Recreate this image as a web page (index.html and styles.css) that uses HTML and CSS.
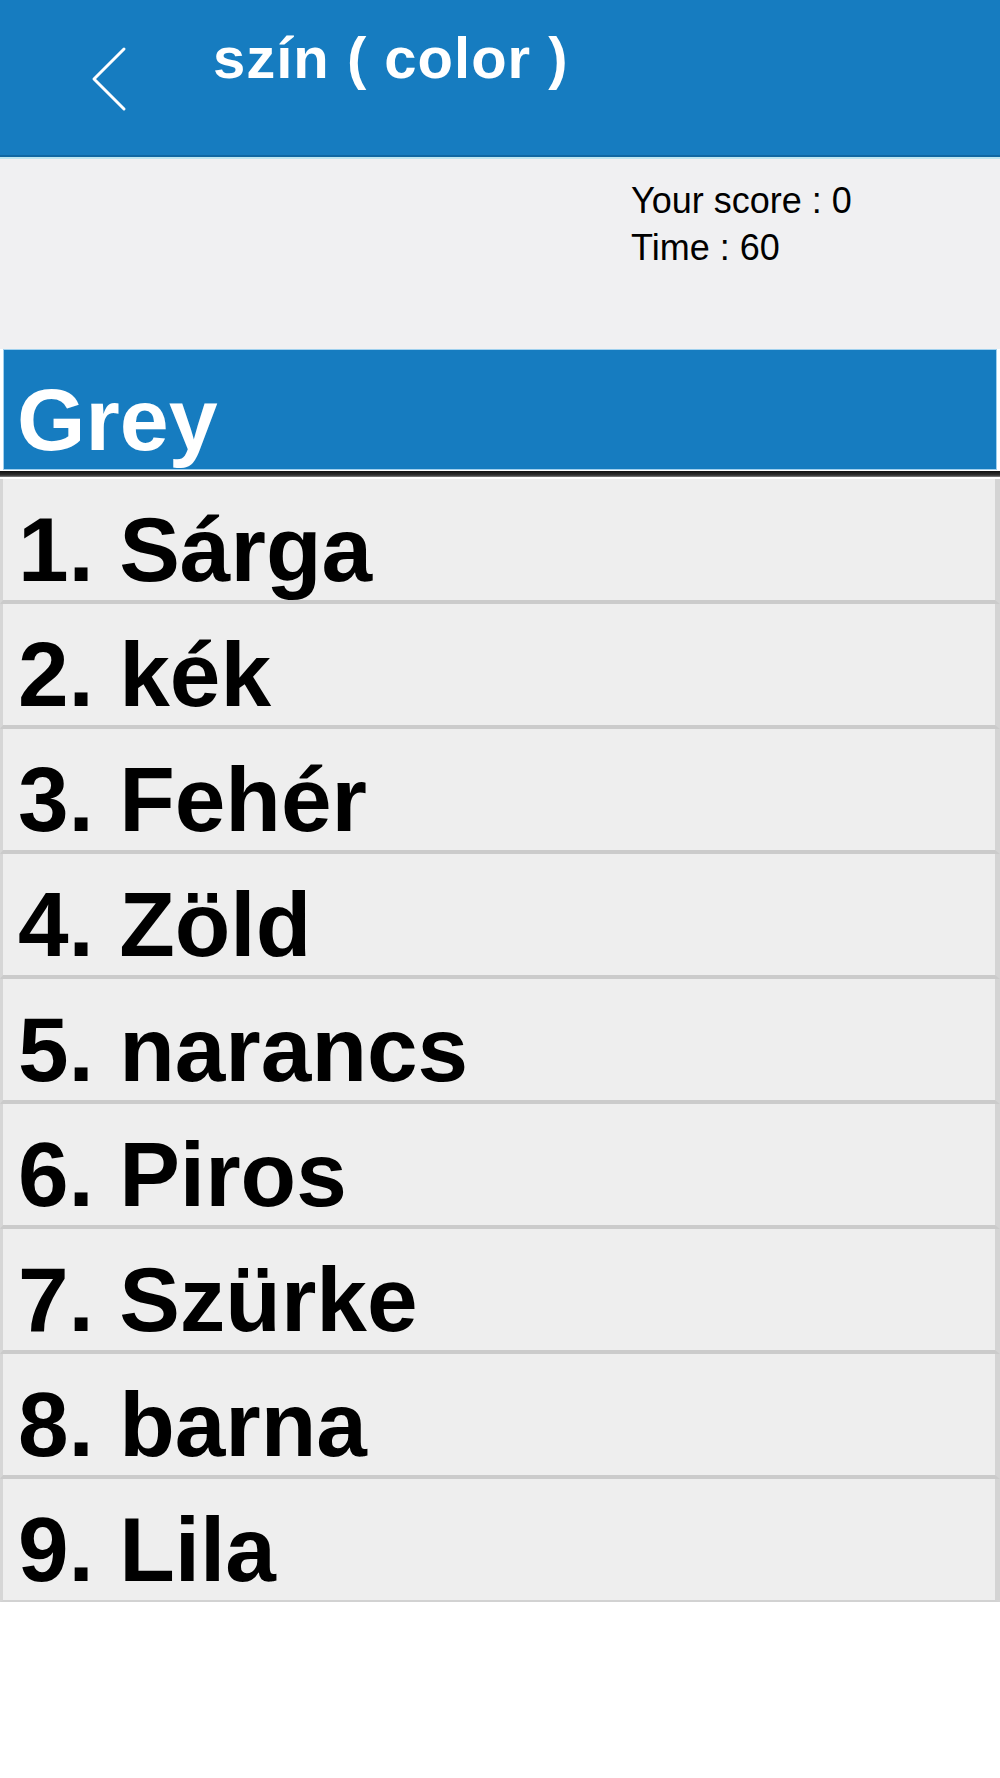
FILE: index.html
```html
<!DOCTYPE html>
<html lang="hu">
<head>
  <meta charset="UTF-8">
  <meta name="viewport" content="width=device-width, initial-scale=1.0">
  <title>szín ( color )</title>
  <link rel="stylesheet" href="styles.css">
</head>
<body>

  <header class="topbar">
    <a class="back" href="#">
      <svg width="40" height="70" viewBox="0 0 40 70">
        <polyline points="33,4 3,34 33,64" fill="none" stroke="#fff" stroke-width="3" stroke-linecap="round" stroke-linejoin="round"/>
      </svg>
    </a>
    <h1 class="title">szín ( color )</h1>
  </header>

  <div class="status">
    <div class="score">Your score : 0</div>
    <div class="time">Time : 60</div>
  </div>

  <div class="question">Grey</div>
  <div class="divider"></div>

  <ul class="answers">
    <li>1. Sárga</li>
    <li>2. kék</li>
    <li>3. Fehér</li>
    <li>4. Zöld</li>
    <li>5. narancs</li>
    <li>6. Piros</li>
    <li>7. Szürke</li>
    <li>8. barna</li>
    <li>9. Lila</li>
  </ul>

</body>
</html>
```

FILE: styles.css
```css
body {
  font-family: "Liberation Sans", Arial, sans-serif;
  background-color: #fff;
  margin: 0;
  padding: 0;
}

.topbar {
  display: flex;
  align-items: flex-start;
  height: 155px;
  background-color: #167cc0;
  border-bottom: 2px solid #0f67a3;
  box-shadow: 0 2px 0 #bfe6f0;
}

.back {
  display: block;
  margin: 45px 0 0 91px;
  width: 40px;
  height: 70px;
}

.title {
  margin: 29px 0 0 82px;
  color: #fff;
  font-size: 58px;
  line-height: 1;
  font-weight: bold;
  letter-spacing: 1px;
}

.status {
  background-color: #f0f0f2;
  height: 172px;
  margin-top: 2px;
  padding: 18px 0 0 631px;
  font-size: 36px;
  line-height: 47px;
  color: #000;
}

.question {
  margin: 0 3px;
  height: 93px;
  padding: 26px 0 0 13px;
  background-color: #167cc0;
  border: 1px solid #9fd0ee;
  color: #fff;
  font-size: 88px;
  line-height: 1;
  font-weight: bold;
}

.divider {
  height: 6px;
  margin: 1px 0 2px;
  background: linear-gradient(#111, #333 70%, #888);
}

.answers {
  list-style: none;
  margin: 0;
  padding: 0;
}

.answers li {
  height: 96px;
  padding: 25px 0 0 15px;
  background-color: #eeeeee;
  border-left: 3px solid #d6d6d6;
  border-right: 5px solid #d4d4d4;
  border-bottom: 4px solid #cbcbcb;
  color: #000;
  font-size: 91px;
  line-height: 1;
  font-weight: bold;
}

.answers li:last-child {
  border-bottom: 2px solid #d2d2d2;
}
```
